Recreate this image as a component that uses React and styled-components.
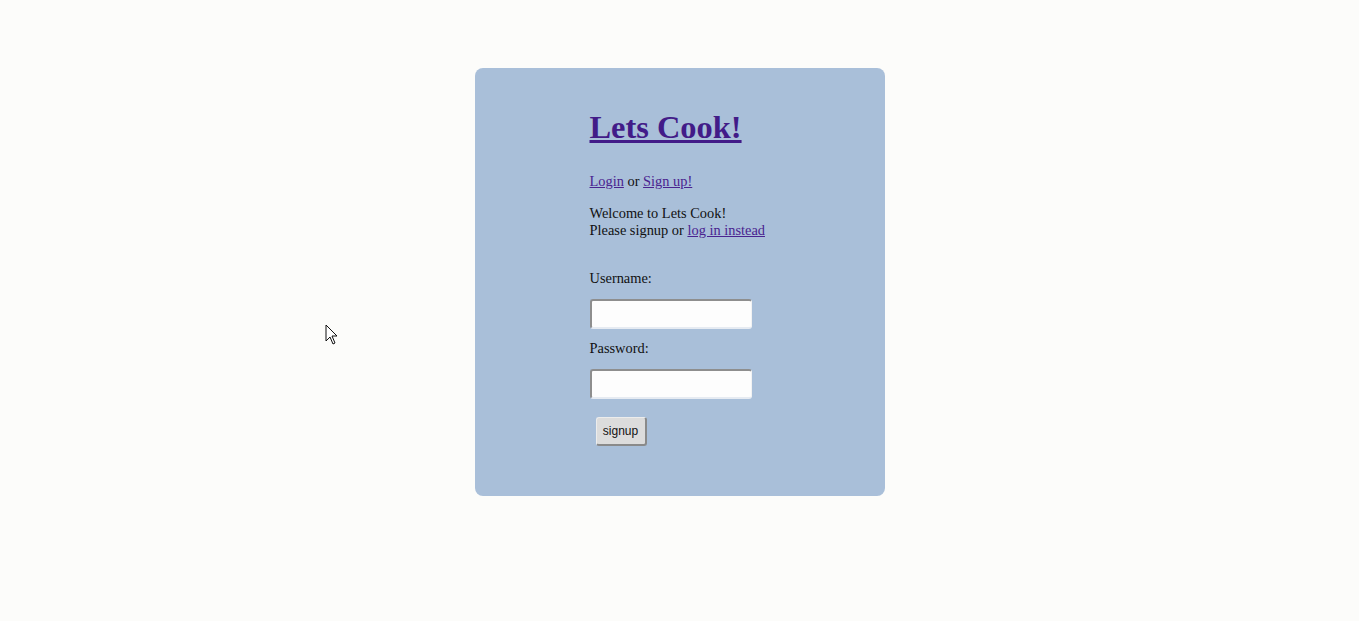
import React from "react";
import styled, { createGlobalStyle } from "styled-components";

const Global = createGlobalStyle`
  html, body { margin: 0; padding: 0; background: #fcfcfa; }
  body { font-family: "Liberation Serif", "Times New Roman", serif; font-size: 14.4px; color: #111; }
`;

const Page = styled.div`
  position: relative;
  min-height: 621px;
  padding-top: 68px;
  box-sizing: border-box;
`;

const Card = styled.main`
  width: 410px;
  margin: 0 auto;
  box-sizing: border-box;
  background: #a9bfd9;
  border-radius: 8px;
  padding: 41px 115px 50px;
  display: flex;
  flex-direction: column;
  align-items: flex-start;
`;

const Title = styled.h1`
  margin: 0 0 27px;
  font-size: 32.4px;
  line-height: 37px;
  font-weight: bold;
  a { color: #421b88; }
`;

const Link = styled.a`
  color: #4a2390;
  text-decoration: underline;
  cursor: pointer;
`;

const Line = styled.p`
  margin: ${(p) => p.$mt || 0}px 0 0;
  line-height: 17px;
  white-space: nowrap;
`;

const Form = styled.form`
  display: flex;
  flex-direction: column;
  align-items: flex-start;
  margin-top: 31px;
`;

const Label = styled.label`
  line-height: 17px;
  margin-top: ${(p) => p.$mt || 0}px;
`;

const Input = styled.input`
  width: 162px;
  height: 30px;
  box-sizing: border-box;
  margin: 12px 0 0;
  background: #fdfdfd;
  border-style: solid;
  border-width: 2px 1px 2px 2px;
  border-color: #8e8e8e #f2f2f2 #e6ebf2 #8e8e8e;
  border-radius: 3px;
  padding: 2px 4px;
  outline: none;
`;

const Button = styled.button`
  margin: 18px 0 0 6px;
  width: 51px;
  height: 29px;
  box-sizing: border-box;
  font-family: "Liberation Sans", Arial, sans-serif;
  font-size: 12px;
  color: #111;
  background: #dcdcdc;
  border-style: solid;
  border-width: 1px 2px 2px 1px;
  border-color: #ececec #8a8a8a #8a8a8a #ececec;
  border-radius: 3px;
  padding: 0;
`;

const Pointer = styled.svg`
  position: absolute;
  left: 325px;
  top: 324px;
`;

export default function App() {
  return (
    <Page>
      <Global />
      <Card>
        <Title>
          <a href="#">Lets Cook!</a>
        </Title>
        <Line>
          <Link>Login</Link> or <Link>Sign up!</Link>
        </Line>
        <Line $mt={15}>Welcome to Lets Cook!</Line>
        <Line>
          Please signup or <Link>log in instead</Link>
        </Line>
        <Form onSubmit={(e) => e.preventDefault()}>
          <Label htmlFor="u">Username:</Label>
          <Input id="u" type="text" />
          <Label htmlFor="p" $mt={11}>Password:</Label>
          <Input id="p" type="password" />
          <Button type="submit">signup</Button>
        </Form>
      </Card>
      <Pointer width="14" height="22" viewBox="0 0 14 22">
        <path d="M1 1 L1 17 L5 13 L8 20 L10 19 L7 12 L12 12 Z" fill="#fff" stroke="#111" strokeWidth="1" strokeLinejoin="round" />
      </Pointer>
    </Page>
  );
}
